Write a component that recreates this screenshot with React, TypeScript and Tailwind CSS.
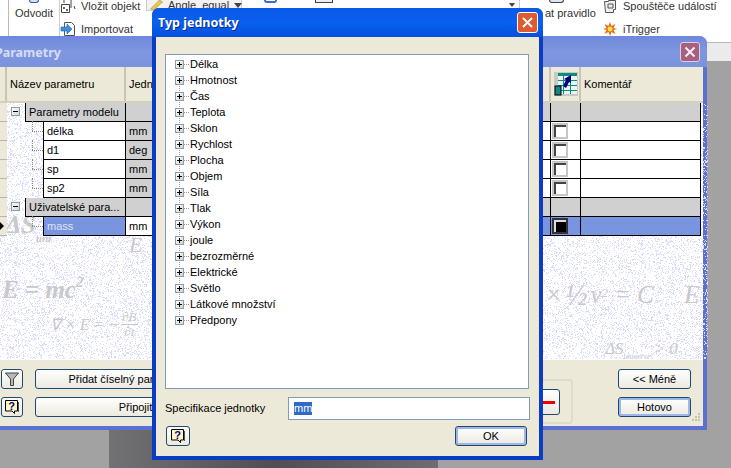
import React from 'react';

const font = { fontFamily: '"Liberation Sans", Tahoma, sans-serif' };
const titleFont = { fontFamily: '"Noto Sans", sans-serif' };

// Speckled background of the parameter table
const buildNoise = () => {
  let seed = 12345;
  const rand = () => {
    seed = (seed * 1664525 + 1013904223) >>> 0;
    return seed / 4294967296;
  };
  let d = '';
  for (let y = 0; y < 256; y++) {
    for (let x = 0; x < 708; x++) {
      if (rand() < 0.2) d += `M${x} ${y}h1v1h-1z`;
    }
  }
  return d;
};
const noisePath = buildNoise();

const units = ['Délka', 'Hmotnost', 'Čas', 'Teplota', 'Sklon', 'Rychlost', 'Plocha', 'Objem', 'Síla', 'Tlak', 'Výkon', 'joule', 'bezrozměrné', 'Elektrické', 'Světlo', 'Látkové množství', 'Předpony'];

const PlusBox = ({ minus = false }: { minus?: boolean }) => (
  <span className="relative block h-[9px] w-[9px] shrink-0 border border-[#8a9cb0] bg-gradient-to-br from-white to-[#d8d4c4]">
    <span className="absolute left-[1px] top-[3px] h-[1px] w-[5px] bg-black" />
    {!minus && <span className="absolute left-[3px] top-[1px] h-[5px] w-[1px] bg-black" />}
  </span>
);

const HelpIcon = () => (
  <svg width="16" height="16" viewBox="0 0 16 16">
    <path d="M1.5 1.5h12v10.5h-3v2.5l-2.5-2.5h-6.5z" fill="#fff9c0" stroke="#000" />
    <path d="M14.5 3v10" stroke="#555" />
    <text x="7.5" y="10.5" textAnchor="middle" fontSize="11" fontWeight="700" fill="#000090" fontFamily="Liberation Sans">?</text>
  </svg>
);

const XpButton = ({ className, children, isDefault = false }: { className: string; children?: React.ReactNode; isDefault?: boolean }) => (
  <div className={`flex items-center justify-center whitespace-nowrap rounded-[3px] border border-[#1d4a6e] bg-gradient-to-b from-white to-[#ebe9e0] text-[11px] text-black ${isDefault ? 'shadow-[inset_0_0_0_2px_#9db8e8]' : ''} ${className}`}>
    {children}
  </div>
);

const Check = ({ on = false }: { on?: boolean }) => (
  <div className={`ml-[1px] mt-[1px] flex h-[16px] w-[16px] items-center justify-center border-2 ${on ? 'border-[#333]' : 'border-[#c6c6c6]'}`}>
    <div className={`h-[12px] w-[12px] border-l-2 border-t-2 ${on ? 'border-[#ddd] bg-black' : 'border-[#444] bg-white'}`} />
  </div>
);

type RowProps = {
  indent: number;
  name: string;
  unit?: string;
  kind: 'group' | 'item' | 'active';
  minus?: boolean;
};

const Row = ({ indent, name, unit, kind, minus }: RowProps) => {
  const nameCell = kind === 'group' ? 'bg-[#d0d0d0] text-black border-l' : kind === 'active' ? 'bg-[#7a95df] text-[#dbe3f9] border-l' : 'bg-white text-black border-l';
  const unitCell = kind === 'active' ? 'bg-white' : 'bg-[#d0d0d0]';
  const restCell = kind === 'group' ? 'bg-[#d0d0d0]' : kind === 'active' ? 'bg-[#7a95df]' : 'bg-white';
  return (
    <div className="relative flex h-[19px] w-[705px] text-[11px]">
      <div className="relative flex w-[11px] shrink-0 items-center border-b border-[#b8b5a6] bg-[#ece9d8]">
        {kind === 'active' && <span className="absolute left-[4px] h-0 w-0 border-y-[4px] border-l-[4px] border-y-transparent border-l-black" />}
      </div>
      <div className="relative shrink-0" style={{ width: indent }}>
        {minus && <span className="absolute left-[4px] top-[4px]"><PlusBox minus /></span>}
        {kind !== 'group' && <span className="absolute left-[25px] top-[9px] h-0 w-[11px] border-t border-dotted border-[#888]" />}
        {kind !== 'group' && <span className="absolute left-[25px] top-[-1px] h-[10px] w-0 border-l border-dotted border-[#888]" />}
      </div>
      <div className={`flex min-w-0 flex-1 items-center whitespace-nowrap border-b border-r border-black pl-[3px] ${nameCell}`}>{name}</div>
      <div className={`flex w-[100px] shrink-0 items-center border-b border-r border-black pl-[3px] ${unitCell}`}>{unit}</div>
      <div className={`w-[325px] shrink-0 border-b border-r border-black ${restCell}`} />
      <div className={`w-[30px] shrink-0 border-b border-r border-black ${restCell}`}>
        {kind !== 'group' && <Check on={kind === 'active'} />}
      </div>
      <div className={`w-[120px] shrink-0 border-b border-r border-black ${restCell}`} />
    </div>
  );
};

const Formula = ({ className, children }: { className: string; children: React.ReactNode }) => (
  <div className={`absolute flex items-center whitespace-nowrap italic text-[#c9c9cc] ${className}`} style={{ fontFamily: '"Liberation Serif", serif' }}>
    {children}
  </div>
);

export default function App() {
  return (
    <div className="relative h-[468px] w-[731px] overflow-hidden bg-[#a2a2a2]" style={font}>
      {/* Ribbon behind the dialogs */}
      <div className="relative flex h-[43px] border-b border-[#b8b8b8] bg-white text-[11px] text-[#333]">
        <div className="w-[9px] border-r border-[#bbb]" />
        <div className="flex w-[51px] flex-col items-center border-r border-[#ccc]">
          <div className="h-[3px] w-[10px] rounded-b-sm border-x border-b border-[#3b5aa0] bg-[#cfe0f8]" />
          <span className="mt-[2px] leading-[16px]">Odvodit</span>
        </div>
        <div className="flex w-[86px] flex-col gap-[9px]">
          <div className="flex h-[12px] items-center gap-[5px]">
            <svg width="16" height="13" viewBox="0 0 16 13" className="shrink-0"><path d="M1.5 4.5h8v8h-8zM4 0v3M11 0v8M14 6l1 3" fill="none" stroke="#444" /><path d="M3 7h2v2h-2zM6 9h2v2h-2z" fill="#666" /></svg>
            <span className="whitespace-nowrap leading-[11px]">Vložit objekt</span>
          </div>
          <div className="flex h-[16px] items-center gap-[5px]">
            <svg width="16" height="16" viewBox="0 0 16 16" className="shrink-0"><path d="M4.5 1.5h7l3 3v10h-10z" fill="#fff" stroke="#555" /><path d="M1 6h6v-3l5 5-5 5v-3h-6z" fill="#3f8fe0" stroke="#1d5fb0" strokeWidth=".6" /></svg>
            <span>Importovat</span>
          </div>
        </div>
        <div className="flex h-[11px] w-[96px] items-center gap-[5px] border-x border-b border-[#ccc] bg-[#f2f2f2] pl-[3px]">
          <svg width="13" height="10" viewBox="0 0 12 10" className="shrink-0"><path d="M0 9l9-9 3 2-9 8z" fill="#ecc94b" stroke="#a88a20" strokeWidth=".6" /></svg>
          <span className="whitespace-nowrap leading-[11px]">Angle_equal</span>
          <span className="ml-auto mr-[2px] h-0 w-0 border-x-[4px] border-t-[5px] border-x-transparent border-t-[#444]" />
        </div>
        <div className="flex w-[120px]">
          <div className="ml-[22px] h-[3px] w-[13px] rounded-b border-x-2 border-b-2 border-[#3b6ac8]" />
          <div className="ml-[38px] h-[3px] w-[18px] border-x border-b border-[#444] bg-[#eee]" />
        </div>
        <div className="w-[152px]" />
        <div className="relative w-[85px]">
          <span className="absolute left-[-5px] top-[3px] h-0 w-0 border-x-[3px] border-t-[4px] border-x-transparent border-t-[#444]" />
          <span className="absolute left-[5px] top-0 h-[36px] border-l border-[#ccc]" />
          <div className="absolute left-[35px] top-0 h-[3px] w-[15px] rounded-b border-x border-b border-[#444] bg-[#dde6f6]" />
          <span className="absolute left-[31px] top-[5px] whitespace-nowrap leading-[16px]">at pravidlo</span>
        </div>
        <div className="flex flex-col gap-[9px] pl-[4px]">
          <div className="flex h-[12px] items-center gap-[5px]">
            <svg width="15" height="13" viewBox="0 0 15 13" className="shrink-0"><path d="M1.5 1.5h4v-1h7v9h-2v3h-8z" fill="#eee" stroke="#555" /><path d="M5 4h5v4h-5z" fill="none" stroke="#555" /></svg>
            <span className="whitespace-nowrap leading-[11px]">Spouštěče událostí</span>
          </div>
          <div className="flex h-[16px] items-center gap-[6px]">
            <svg width="14" height="14" viewBox="0 0 14 14" className="shrink-0"><path d="M7 0l1.5 4 4-2-2 4 3.5 1-3.5 1 2 4-4-2-1.500 4-1.500-4-4 2 2-4-3.500-1 3.500-1-2-4 4 2z" fill="#e86a10" /><circle cx="7" cy="7" r="2.500" fill="#ffe14a" /></svg>
            <span>iTrigger</span>
          </div>
        </div>
      </div>
      <div className="h-[18px] bg-[#ebebeb]" />
      <div className="absolute bottom-0 left-[109px] h-[38px] w-[329px] bg-gradient-to-r from-[#727274] via-[#4f4f52] to-[#6d6d72]" />

      {/* Parametry window */}
      <div className="absolute left-[-8px] top-[36px] flex h-[394px] w-[715px] flex-col rounded-t-[8px] border-x-4 border-b-4 border-[#5d70d2] bg-[#ece9d8]">
        <div className="-mx-[4px] flex h-[31px] shrink-0 items-center rounded-t-[8px] bg-gradient-to-b from-[#6f88dc] via-[#7f97e0] to-[#7b93dc] pl-[3px]">
          <span className="mt-[3px] text-[12.5px] font-bold text-[#d5ddf5]" style={titleFont}>Parametry</span>
          <div className="ml-auto mr-[7px] flex h-[20px] w-[20px] items-center justify-center rounded-[3px] border border-[#d8d0e4] bg-[#a8607e]">
            <svg width="12" height="12" viewBox="0 0 12 12"><path d="M1.500 1.500l9 9M10.500 1.500l-9 9" stroke="#f4eef4" strokeWidth="2" /></svg>
          </div>
        </div>
        <div className="relative flex min-h-0 flex-1 flex-col">
          <div className="flex h-[36px] shrink-0 border-b-2 border-[#d4d0c0] text-[11px] text-black">
            <div className="w-[11px] shrink-0 border-r-2 border-[#c8c5b4]" />
            <div className="flex w-[119px] shrink-0 items-center border-r-2 border-[#c8c5b4] pl-[3px]">Název parametru</div>
            <div className="flex w-[100px] shrink-0 items-center border-r-2 border-[#c8c5b4] pl-[3px]">Jednotka</div>
            <div className="w-[325px] shrink-0 border-r-2 border-[#c8c5b4]" />
            <div className="flex w-[30px] shrink-0 items-center border-r-2 border-[#c8c5b4] pl-[3px]">
              <svg width="24" height="24" viewBox="0 0 24 24">
                <rect width="24" height="24" fill="#c8c8c8" />
                <path d="M4 1h19v21h-19z" fill="#e8f4f0" />
                <path d="M4 1h19v3h-19zM4 8h19v1h-19zM4 13h19v1h-19zM4 18h19v1h-19zM9 1h1v21h-1zM16 1h1v21h-1z" fill="#0f8a80" />
                <path d="M9 14l3-6-2-1 7-4v8l-2-1-3 6z" fill="#000080" />
                <rect x="1" y="14" width="6" height="9" fill="#0f8a80" stroke="#000" />
              </svg>
            </div>
            <div className="flex w-[120px] shrink-0 items-center pl-[3px]">Komentář</div>
          </div>
          <div className="relative min-h-0 flex-1 bg-white">
            <svg className="absolute left-[4px] top-0" width="708" height="256" viewBox="0 0 708 256"><path d={noisePath} fill="#dadafa" /></svg>
            <Formula className="left-[9px] top-[102px] text-[26px] font-bold">ΔS<sub className="mt-[22px] text-[11px]">uni</sub></Formula>
            <Formula className="left-[6px] top-[168px] text-[25px] font-bold">E = mc<sup className="text-[15px]">2</sup></Formula>
            <Formula className="left-[133px] top-[125px] text-[22px]">E =</Formula>
            <Formula className="left-[54px] top-[207px] gap-[2px] text-[16px]">
              ∇ × E = −
              <span className="flex flex-col items-center text-[13px] leading-[14px]">
                <span className="border-b border-[#c9c9cc] px-[1px]">∂B</span>
                <span>∂t</span>
              </span>
            </Formula>
            <Formula className="left-[549px] top-[172px] gap-[3px] text-[25px]">
              ×
              <span className="text-[30px] leading-[40px]">½</span>
              <span>v<sup className="text-[13px]">2</sup> = C</span>
            </Formula>
            <Formula className="left-[688px] top-[172px] text-[26px]">E</Formula>
            <Formula className="left-[609px] top-[233px] text-[17px]">ΔS<sub className="mt-[12px] text-[8px]">universe</sub><span className="ml-[3px]">&gt; 0</span></Formula>
            <div className="absolute left-0 top-0 flex flex-col">
              <Row indent={18} name="Parametry modelu" kind="group" minus />
              <Row indent={36} name="délka" unit="mm" kind="item" />
              <Row indent={36} name="d1" unit="deg" kind="item" />
              <Row indent={36} name="sp" unit="mm" kind="item" />
              <Row indent={36} name="sp2" unit="mm" kind="item" />
              <Row indent={18} name="Uživatelské para..." kind="group" minus />
              <Row indent={36} name="mass" unit="mm" kind="active" />
            </div>
          </div>
          <div className="relative flex h-[67px] shrink-0 border-t border-white bg-[#ece9d8] pt-[9px]">
            <div className="ml-[5px] flex flex-col gap-[8px]">
              <XpButton className="h-[20px] w-[22px]">
                <svg width="14" height="14" viewBox="0 0 14 14"><path d="M.5 1h13l-5 6v6.500h-3v-6.500z" fill="#b8b8b8" stroke="#444" /></svg>
              </XpButton>
              <XpButton className="h-[20px] w-[22px]"><HelpIcon /></XpButton>
            </div>
            <div className="ml-[12px] flex flex-col items-start gap-[8px]">
              <XpButton className="h-[20px] w-[180px]">Přidat číselný parametr</XpButton>
              <XpButton className="h-[20px] w-[201px]">Připojit</XpButton>
            </div>
            <div className="absolute left-[520px] top-[19px] h-[45px] w-[57px] rounded-[4px] border-2 border-[#dedbcb]">
              <XpButton className="ml-[20px] mt-[8px] h-[26px] w-[22px] justify-start">
                <span className="h-[3px] w-[16px] bg-[#f00000]" />
              </XpButton>
            </div>
            <div className="ml-auto mr-[12px] flex flex-col gap-[8px]">
              <XpButton className="h-[20px] w-[73px]">&lt;&lt; Méně</XpButton>
              <XpButton className="h-[20px] w-[73px]" isDefault>Hotovo</XpButton>
            </div>
            <svg className="absolute bottom-[1px] right-[2px]" width="12" height="12" viewBox="0 0 12 12"><path d="M9 0h2v2h-2zM6 3h2v2h-2zM9 3h2v2h-2zM3 6h2v2h-2zM6 6h2v2h-2zM9 6h2v2h-2z" fill="#c4c1b0" /></svg>
          </div>
        </div>
      </div>

      {/* Typ jednotky dialog */}
      <div className="absolute left-[152px] top-[8px] flex h-[452px] w-[391px] flex-col rounded-t-[7px] border-x-4 border-b-4 border-[#0a3cc4] bg-[#ece9d8]">
        <div className="-mx-[4px] flex h-[29px] shrink-0 items-center rounded-t-[7px] bg-gradient-to-b from-[#0a58e6] via-[#0a60f0] to-[#0450dc] pl-[6px]">
          <span className="mt-[2px] text-[12.5px] font-bold text-white [text-shadow:1px_1px_0_#0a2a90]" style={titleFont}>Typ jednotky</span>
          <div className="ml-auto mr-[5px] flex h-[21px] w-[21px] items-center justify-center rounded-[3px] border border-white bg-[#df5a2e]">
            <svg width="13" height="13" viewBox="0 0 13 13"><path d="M2 2l9 9M11 2l-9 9" stroke="#fff" strokeWidth="2" /></svg>
          </div>
        </div>
        <div className="relative ml-[9px] mr-[10px] mt-[17px] h-[335px] shrink-0 border border-[#7f9db9] bg-white pl-[9px] pt-[1px]">
          <span className="absolute left-[13px] top-[10px] h-[256px] w-0 border-l border-dotted border-[#999]" />
          {units.map((unit) => (
            <div key={unit} className="relative flex h-[16px] items-center text-[11px] text-black">
              <PlusBox />
              <span className="h-0 w-[5px] border-t border-dotted border-[#999]" />
              <span className="ml-[1px] whitespace-nowrap">{unit}</span>
            </div>
          ))}
        </div>
        <div className="mx-[9px] mt-[8px] flex h-[23px] items-center justify-between text-[11px] text-black">
          <span>Specifikace jednotky</span>
          <div className="flex h-[23px] w-[242px] items-center border border-[#7f9db9] bg-white pl-[5px]">
            <span className="bg-[#316ac5] leading-[13px] text-white">mm</span>
          </div>
        </div>
        <div className="mx-[10px] mt-[6px] flex items-center justify-between">
          <XpButton className="h-[20px] w-[24px]"><HelpIcon /></XpButton>
          <XpButton className="mr-[2px] h-[20px] w-[72px]" isDefault>OK</XpButton>
        </div>
      </div>
    </div>
  );
}
